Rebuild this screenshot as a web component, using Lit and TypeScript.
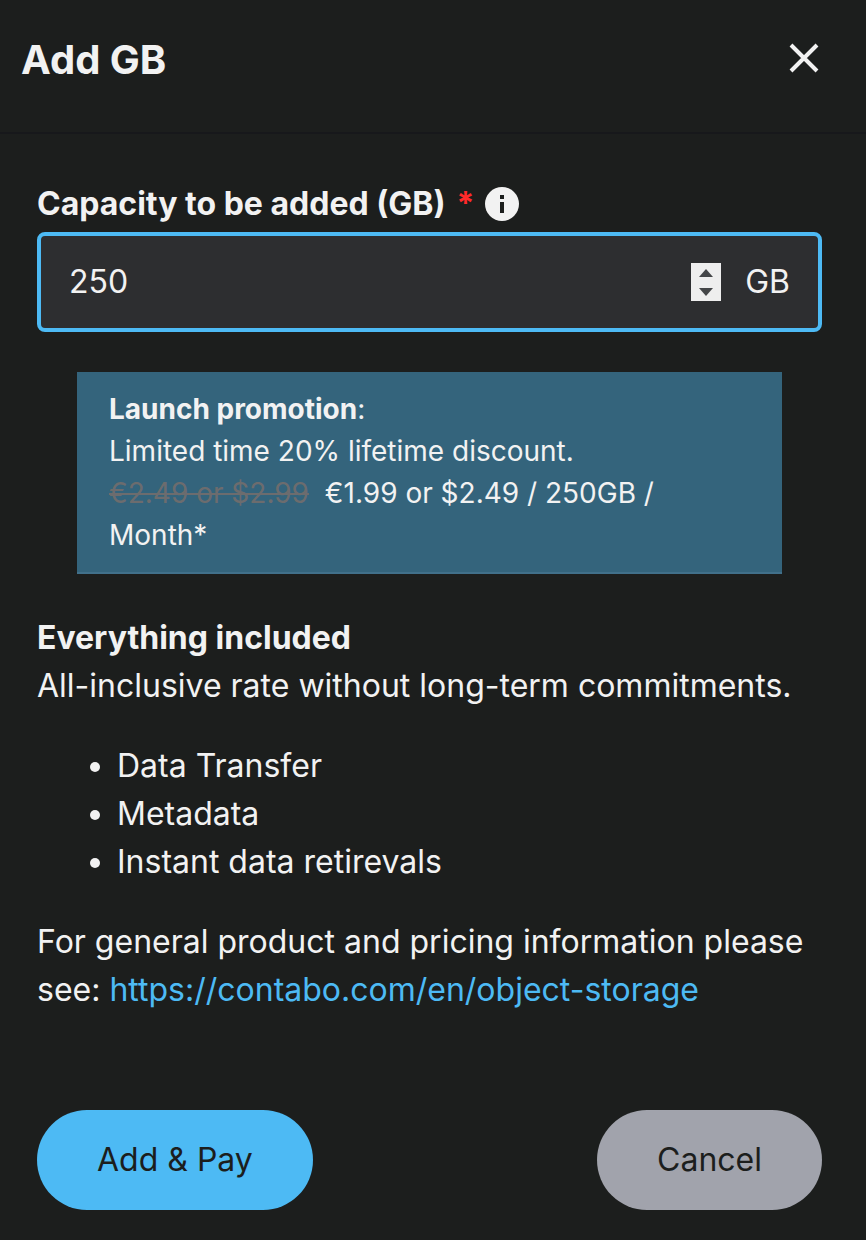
import { LitElement, html, css } from "lit";
import { customElement, state } from "lit/decorators.js";

@customElement("app-root")
export class AppRoot extends LitElement {
  @state() private capacity = 250;

  static styles = css`
    :host {
      display: block;
      min-height: 100vh;
      background: #1c1e1d;
      color: #f2f2f2;
      font-family: Inter, "Liberation Sans", sans-serif;
      font-size: 32px;
      font-weight: 400;
      line-height: 48px;
    }
    * {
      box-sizing: border-box;
    }
    button,
    input {
      font: inherit;
      color: inherit;
      border: 0;
      margin: 0;
    }
    h1,
    h2,
    p,
    ul {
      margin: 0;
    }
    .header {
      display: flex;
      align-items: flex-start;
      justify-content: space-between;
      padding: 30px 40px 42px 21px;
      border-bottom: 2px solid #17181b;
    }
    .title {
      font-size: 40px;
      line-height: 60px;
      font-weight: 700;
    }
    .close {
      display: flex;
      padding: 6px;
      margin-top: 6px;
      background: none;
    }
    .body {
      padding: 46px 44px 30px 37px;
    }
    .label-row {
      display: flex;
      align-items: center;
      gap: 11px;
      padding-bottom: 4px;
    }
    .label {
      font-weight: 700;
    }
    .required {
      color: #ff2a2a;
    }
    .info {
      display: flex;
      padding: 0;
      background: none;
    }
    .field {
      display: flex;
      align-items: center;
      height: 100px;
      padding: 0 28px;
      border: 4px solid #4dbaf4;
      border-radius: 8px;
      background: #2d2e30;
    }
    .input {
      flex: 1;
      min-width: 0;
      padding: 0;
      background: none;
      outline: none;
      appearance: textfield;
    }
    .input::-webkit-inner-spin-button {
      appearance: none;
    }
    .spinner {
      display: flex;
      flex-direction: column;
      width: 30px;
      margin-right: 24px;
      background: #eeeeee;
    }
    .step {
      display: flex;
      align-items: center;
      justify-content: center;
      height: 19px;
      padding: 0;
      background: none;
    }
    .promo {
      margin: 40px;
      padding: 16px 32px;
      border-bottom: 2px solid #41708a;
      background: #34647c;
      font-size: 28px;
      line-height: 42px;
    }
    .bold {
      font-weight: 700;
    }
    .old {
      margin-right: 8px;
      color: #6c6c6e;
    }
    .heading {
      font-size: 32px;
      font-weight: 700;
    }
    .list {
      margin: 32px 0;
      padding-left: 80px;
    }
    .link {
      color: #4dbaf4;
      text-decoration: none;
    }
    .actions {
      display: flex;
      justify-content: space-between;
      margin-top: 96px;
    }
    .action {
      height: 100px;
      padding: 0 60px;
      border-radius: 50px;
      color: #1c1e1d;
    }
    .pay {
      background: #4dbaf4;
    }
    .cancel {
      background: #a1a3ac;
    }
  `;

  private step(by: number) {
    this.capacity = Math.max(0, this.capacity + by);
  }

  render() {
    return html`
      <header class="header">
        <h1 class="title">Add GB</h1>
        <button class="close" aria-label="Close">
          <svg width="32" height="32" viewBox="0 0 32 32" fill="none" stroke="#f2f2f2" stroke-width="4">
            <path d="M3 3 29 29M29 3 3 29" />
          </svg>
        </button>
      </header>
      <main class="body">
        <div class="label-row">
          <label class="label" for="capacity">Capacity to be added (GB)</label>
          <span class="label required">*</span>
          <button class="info" aria-label="Capacity information">
            <svg width="34" height="34" viewBox="0 0 34 34">
              <circle cx="17" cy="17" r="17" fill="#f2f2f2" />
              <path d="M15 8h4v4h-4zM15 15h4v11h-4z" fill="#1c1e1d" />
            </svg>
          </button>
        </div>
        <div class="field">
          <input
            class="input"
            id="capacity"
            type="number"
            required
            .value=${String(this.capacity)}
            @input=${(e: Event) => (this.capacity = Number((e.target as HTMLInputElement).value))}
          />
          <div class="spinner">
            <button class="step" aria-label="Increase" @click=${() => this.step(250)}>
              <svg width="14" height="8" viewBox="0 0 14 8"><path d="M0 8 7 0 14 8z" fill="#444648" /></svg>
            </button>
            <button class="step" aria-label="Decrease" @click=${() => this.step(-250)}>
              <svg width="14" height="8" viewBox="0 0 14 8"><path d="M0 0 7 8 14 0z" fill="#444648" /></svg>
            </button>
          </div>
          <span>GB</span>
        </div>
        <section class="promo">
          <p><strong class="bold">Launch promotion</strong>:</p>
          <p>Limited time 20% lifetime discount.</p>
          <p><s class="old">€2.49 or $2.99</s> €1.99 or $2.49 / 250GB / Month*</p>
        </section>
        <h2 class="heading">Everything included</h2>
        <p>All-inclusive rate without long-term commitments.</p>
        <ul class="list">
          <li>Data Transfer</li>
          <li>Metadata</li>
          <li>Instant data retirevals</li>
        </ul>
        <p>
          For general product and pricing information please see:
          <a class="link" href="https://contabo.com/en/object-storage">https://contabo.com/en/object-storage</a>
        </p>
        <div class="actions">
          <button class="action pay">Add &amp; Pay</button>
          <button class="action cancel">Cancel</button>
        </div>
      </main>
    `;
  }
}
